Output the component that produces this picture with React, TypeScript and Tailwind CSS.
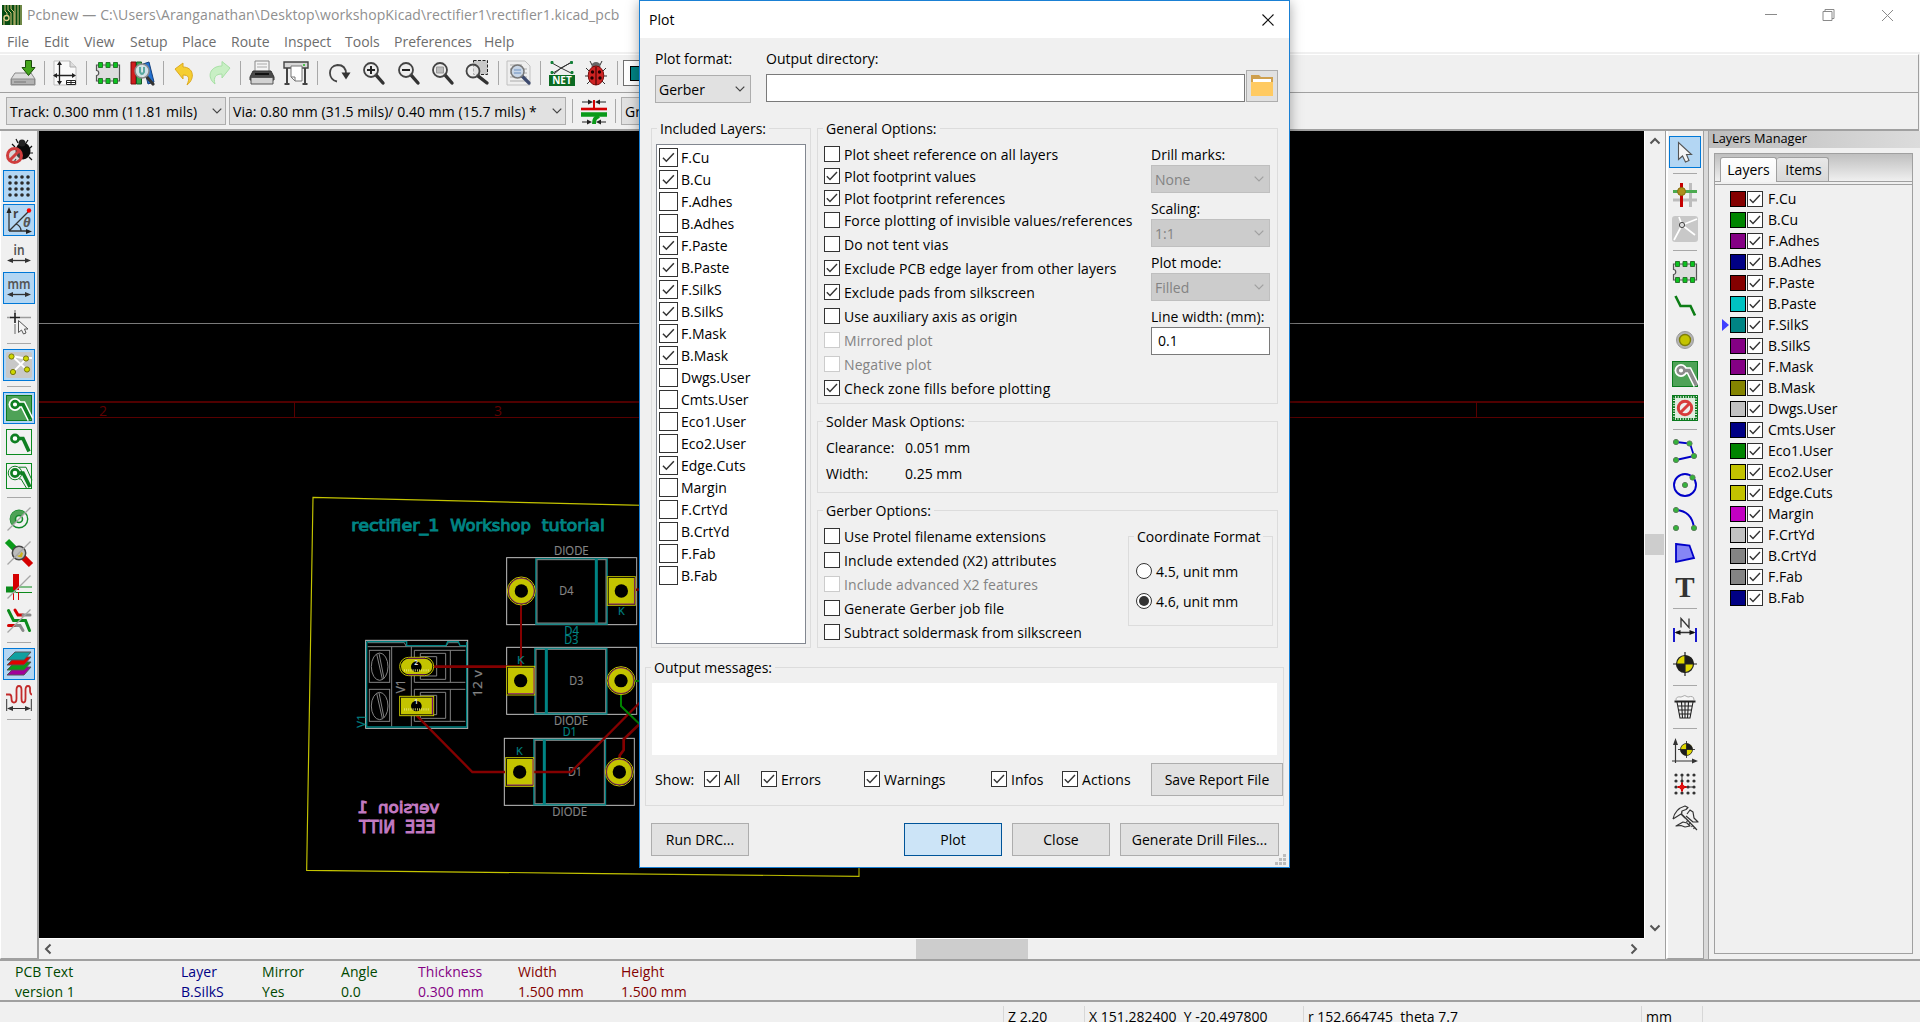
import React from "react";

type Kids = { children?: React.ReactNode };

/* ---------- small controls ---------- */

function Check({ on = false, big = false, off = false }: { on?: boolean; big?: boolean; off?: boolean }) {
  return (
    <span
      className={
        "flex shrink-0 items-center justify-center border bg-white " +
        (big ? "size-[19px] " : "size-4 ") +
        (off ? "border-[#cccccc]" : "border-[#333333]")
      }
    >
      {on && (
        <svg viewBox="0 0 14 14" className={big ? "size-[15px]" : "size-[14px]"}>
          <path d="M1.8 7.3 5 10.5 12 3" fill="none" stroke="#333" strokeWidth="1.4" />
        </svg>
      )}
    </span>
  );
}

function Chevron({ dim = false }: { dim?: boolean }) {
  return (
    <svg viewBox="0 0 10 6" className="h-[6px] w-[10px] shrink-0">
      <path d="M.7.7 5 5 9.3.7" fill="none" stroke={dim ? "#a0a0a0" : "#444"} strokeWidth="1.2" />
    </svg>
  );
}

function Combo({ text, className = "", dim = false, wide = false }: { text: string; className?: string; dim?: boolean; wide?: boolean }) {
  return (
    <div
      className={
        "flex h-7 shrink-0 items-center justify-between border pl-[3px] whitespace-nowrap " +
        (wide ? "pr-[3px] tracking-[0.05px] " : "pr-[5px] ") +
        (dim ? "border-[#bfbfbf] bg-[#cccccc] text-[#838383] " : "border-[#adadad] bg-[#e1e1e1] ") +
        className
      }
    >
      <span className="pt-px">{text}</span>
      <Chevron dim={dim} />
    </div>
  );
}

function Button({ text, className = "", primary = false }: { text: string; className?: string; primary?: boolean }) {
  return (
    <div
      className={
        "flex h-[33px] shrink-0 items-center justify-center border tracking-[0.05px] whitespace-nowrap " +
        (primary ? "border-[#005499] bg-[#cce4f7] " : "border-[#adadad] bg-[#e1e1e1] ") +
        className
      }
    >
      {text}
    </div>
  );
}

function Group({ title, className = "", children }: Kids & { title: string; className?: string }) {
  return (
    <div className={"flex shrink-0 flex-col border border-[#dcdcdc] " + className}>
      <div className="-mt-[9px] ml-[5px] h-[18px] w-fit shrink-0 bg-[#f0f0f0] px-[3px] leading-[18px] whitespace-nowrap">
        {title}
      </div>
      {children}
    </div>
  );
}

function Option({ text, on, off, h = "h-6", track = "" }: { text: string; on?: boolean; off?: boolean; h?: string; track?: string }) {
  return (
    <div className={"flex items-center gap-1 whitespace-nowrap " + h + (off ? " text-[#838383]" : "")}>
      <Check on={on} off={off} />
      <span className={"pt-px " + track}>{text}</span>
    </div>
  );
}

/* ---------- icons (26 x 26) ---------- */

function I({ children, className = "size-[26px]" }: Kids & { className?: string }) {
  return (
    <svg viewBox="0 0 26 26" fill="none" className={className + " shrink-0 overflow-visible"}>
      {children}
    </svg>
  );
}

const Strike = () => <path d="M1.5 24.5 24.5 1.5" stroke="#a6a6a6" strokeWidth="1.3" />;
const Lens = ({ x = 11, y = 10, r = 7 }: { x?: number; y?: number; r?: number }) => (
  <>
    <path d={`M${x + r * 0.7} ${y + r * 0.7} 23 23`} stroke="#333" strokeWidth="3.4" strokeLinecap="round" />
    <circle cx={x} cy={y} r={r} fill="#ececec" fillOpacity=".7" stroke="#444" strokeWidth="1.8" />
  </>
);

const AppIcon = () => (
  <svg viewBox="0 0 20 20" className="size-5 shrink-0">
    <rect width="20" height="20" fill="#064c12" />
    <path d="M3 0v6l2 2v4M6 0v5l3 3v12M9 0v4l3 3v13M13 0v20M16 0v20M19 0v20M2 13v7" stroke="#d8c37c" strokeWidth="1" fill="none" />
    <circle cx="4.500" cy="13" r="2.500" fill="#064c12" stroke="#e3cf8b" strokeWidth="1.300" />
  </svg>
);
const Save = () => (
  <I>
    <path d="M5 13h16l4 6v6H1v-6z" fill="#dcdcdc" stroke="#8a8a8a" />
    <path d="M1.500 19h23v5.500h-23z" fill="#b2b2b2" stroke="#8a8a8a" />
    <path d="M4 22h12" stroke="#777" />
    <path d="M15.500.5h6v7H25l-6.500 8-6.500-8h3.500z" fill="#44a51c" stroke="#1b4d0a" />
  </I>
);
const Page = () => (
  <I>
    <path d="M2 1h16l6 6v18H2z" fill="#fafafa" stroke="#bdbdbd" />
    <path d="M18 1v6h6" stroke="#aaa" fill="#ddd" />
    <path d="M7.500 3v20M2 15.500h20" stroke="#222" strokeWidth="1.300" />
    <path d="m7.500 1 2.500 4H5zM7.500 25l2.500-4H5zM1 15.500 5 13v5zM24 15.500 20 13v5z" fill="#222" />
    <path d="M14.500 20.500h9v4h-9zM14.500 22.500h9M19 20.500v4" stroke="#222" fill="#fff" />
  </I>
);
const Footprint = () => (
  <I>
    <path d="M1.500 5h23v16h-23v-5.500c3 0 3-5 0-5z" fill="#ddd" stroke="#555" strokeWidth="1.200" />
    <path d="M3.500 2.500h4v5h-4zM11 2.500h4v5h-4zM18.500 2.500h4v5h-4zM3.500 18.500h4v5h-4zM11 18.500h4v5h-4zM18.500 18.500h4v5h-4z" fill="#0bc41f" stroke="#28752c" />
  </I>
);
const Library = () => (
  <I>
    <path d="M2 2h5v22H2z" fill="#d11d1d" stroke="#7c0c0c" />
    <path d="M7.500 2h5v22h-5z" fill="#31a54b" stroke="#155c26" />
    <path d="m14 4 6-2 5 20-6 2z" fill="#2472d1" stroke="#123f7d" />
    <path d="m17 16 7 8" stroke="#333" strokeWidth="3.200" strokeLinecap="round" />
    <circle cx="13" cy="11" r="7" fill="#d9e6ea" fillOpacity=".95" stroke="#8a8a8a" strokeWidth="1.500" />
    <path d="M11 7v5q2 4 4 0V7" stroke="#5aa8a0" strokeWidth="2" />
  </I>
);
const Undo = () => (
  <I>
    <path d="M3 9 11 3v4c10 0 13 11 4 18 3-7 2-10-4-10v4z" fill="#f5ce31" stroke="#dca920" />
  </I>
);
const Redo = () => (
  <I>
    <path d="M24 8 16 1.500V6C4 6 0 17 9 24c-2-7 1-10 7-10v4z" fill="#c8efc4" stroke="#a7e0a5" />
  </I>
);
const Printer = () => (
  <I>
    <path d="M6 1h14v11H6z" fill="#f4f4f4" stroke="#888" />
    <path d="M8 4h10M8 7h10" stroke="#aaa" />
    <path d="M4 11h18l3 6v3H1v-3z" fill="#4a4a4a" stroke="#333" />
    <path d="M2 17.500h22V24H2z" fill="#d2d2d2" stroke="#555" />
    <path d="M6 14h14" stroke="#111" strokeWidth="2" />
  </I>
);
const Plotter = () => (
  <I>
    <path d="M1 2h24v6H1z" fill="#d7d7d7" stroke="#444" strokeWidth="1.400" />
    <path d="M4 8v15M22 8v15M1.500 24h5M19.500 24h5" stroke="#444" strokeWidth="2" />
    <path d="M8 6h11v15h-7l-4-4z" fill="#fff" stroke="#777" />
    <path d="M8 17h4v4" stroke="#777" />
    <path d="M20 5h2" stroke="#2b2" strokeWidth="1.500" />
  </I>
);
const Refresh = () => (
  <I>
    <path d="M11 21.500C2 20 1 6 11.500 5c6 0 8.500 4 8.500 9" stroke="#444" strokeWidth="1.800" />
    <path d="M15.500 12.500h9l-4.500 7z" fill="#333" />
  </I>
);
const ZoomIn = () => (
  <I>
    <Lens />
    <path d="M7 10h8M11 6v8" stroke="#222" strokeWidth="2" />
  </I>
);
const ZoomOut = () => (
  <I>
    <Lens />
    <path d="M7 10h8" stroke="#222" strokeWidth="2" />
  </I>
);
const ZoomFit = () => (
  <I>
    <Lens />
    <path d="M7.500 7h7v6h-7z" fill="#bbb" stroke="#999" />
  </I>
);
const ZoomArea = () => (
  <I>
    <path d="M9.500.5h14v14h-14z" fill="#c8c8c8" stroke="#222" strokeDasharray="3 1.500" />
    <Lens x={9} y={11} r={6.500} />
  </I>
);
const Find = () => (
  <I>
    <path d="M1 1h18l5 5v19H1z" fill="#eee" stroke="#c0c0c0" />
    <path d="M4 5h12M4 9h17M4 13h17M4 17h17M4 21h17" stroke="#aaa" />
    <path d="M16 16 23 23" stroke="#3d4a6e" strokeWidth="3.200" strokeLinecap="round" />
    <circle cx="11.500" cy="11.500" r="6.500" fill="#c5d4e6" fillOpacity=".9" stroke="#777" strokeWidth="1.500" />
    <path d="M8 10h7M8 13h7" stroke="#6d92c4" />
  </I>
);
const Net = () => (
  <I>
    <path d="M3 3 12 8l11-6M4 13 21 3M5 14 12 8l10 5" stroke="#333" />
    <path d="M2 1.500h2v2H2zM21.500 1.500h2v2h-2zM2 11.500h2v2H2zM22 11.500h2v2h-2z" fill="#15803a" stroke="#15803a" />
    <rect y="15" width="26" height="11" fill="#0b6b22" />
    <text x="13" y="24.300" textAnchor="middle" fill="#fff" fontSize="10" fontWeight="700" fontFamily="Open Sans">NET</text>
  </I>
);
const LadyBug = () => (
  <I>
    <path d="m9 5-2-4M17 5l2-4M6 11 3 8M20 11l3-3M6 16H2M20 16h4M7 21l-3 3M19 21l3 3" stroke="#333" />
    <ellipse cx="13" cy="6" rx="4.500" ry="4" fill="#666" />
    <ellipse cx="13" cy="15.500" rx="7.800" ry="9.500" fill="#cf2323" stroke="#7c0808" />
    <path d="M13 7v18" stroke="#300" />
    <g fill="#200">
      <circle cx="9.500" cy="12" r="1.700" /><circle cx="16.500" cy="12" r="1.700" /><circle cx="9" cy="18" r="1.700" />
      <circle cx="17" cy="18" r="1.700" />
    </g>
  </I>
);
const TrackWidth = () => (
  <I className="h-[26px] w-[28px]">
    <path d="M0 11h26" stroke="#d40000" strokeWidth="2.600" />
    <path d="M13 11V2" stroke="#d40000" strokeWidth="2" />
    <path d="M0 16.500h26" stroke="#0a9a1a" strokeWidth="4.500" />
    <path d="M13 26c0-5 1-6 5-8" stroke="#0a9a1a" strokeWidth="4" />
    <path d="M1 4h7M25 4h-7M1 24h7M25 24h-7" stroke="#222" />
    <path d="m7 1.500 5 2.500-5 2.500zM19 1.500 14 4l5 2.500zM6 21.500l5 2.500-5 2.500zM20 21.500 15 24l5 2.500z" fill="#222" />
  </I>
);

/* left toolbar */
const DrcOff = () => (
  <I>
    <path d="m12 4-2-4M20 4l2-3M9 8 6 5M24 9l2-2M24 14h3M23 18l3 3M10 20l-2 3" stroke="#111" strokeWidth="1.200" />
    <ellipse cx="17" cy="12" rx="7.500" ry="8.500" fill="#0a0a0a" />
    <circle cx="16" cy="4" r="3.500" fill="#222" />
    <circle cx="8.500" cy="16.500" r="7" fill="#aaa" fillOpacity=".35" stroke="#cf3d3d" strokeWidth="3" />
    <path d="m13.500 11.500-10 10" stroke="#cf3d3d" strokeWidth="3" />
  </I>
);
const dots = [4, 10, 16, 22];
const GridDots = () => (
  <I>
    {dots.map((y) => dots.map((x) => <circle key={x + "-" + y} cx={x} cy={y} r="1.800" fill="#2b2b2b" />))}
  </I>
);
const Polar = () => (
  <I>
    <path d="M3 24V4M3 24h19M3 24 23 4M10 17q5 2 5 7" stroke="#333" strokeWidth="1.300" />
    <path d="M3 0 5.500 6h-5zM26 24.500l-6-2.500v5z" fill="#222" />
    <circle cx="23" cy="3.500" r="2.200" fill="#f00" />
    <text x="7" y="11" fontSize="12" fontWeight="700" fill="#444" fontFamily="Open Sans">r</text>
    <text x="17" y="20" fontSize="13" fontWeight="700" fontStyle="italic" fill="#555" fontFamily="Open Sans">θ</text>
  </I>
);
const Unit = ({ t }: { t: string }) => (
  <I>
    <text x="13" y="13.500" textAnchor="middle" fontSize="14.500" fontWeight="600" fill="#555" fontFamily="Noto Sans" textLength={t === "mm" ? 23 : 11} lengthAdjust="spacingAndGlyphs">{t}</text>
    <path d="M4 19.500h18" stroke="#333" strokeWidth="1.300" />
    <path d="M1 19.500 7 17v5zM25 19.500 19 17v5z" fill="#333" />
  </I>
);
const CursorShape = () => (
  <I>
    <path d="M9 1v4M9 15v10M1 8.500h4M14 8.500h11" stroke="#9c9c9c" strokeWidth="1.600" />
    <path d="M9 4v10M4 8.500h10" stroke="#222" strokeWidth="1.600" />
    <path d="M12.500 11.500v12l3-2.500 2 4 2.500-1-1.500-4h3.500z" fill="#f4f4f4" stroke="#555" />
  </I>
);
const Rats = () => (
  <I>
    <rect width="26" height="26" rx="2" fill="#c8c8c8" />
    <path d="m6 4 16 3M6 4l15 14M7 20 20 7M20 6h6" stroke="#fff" strokeWidth="1.800" />
    <g fill="#cfd800" stroke="#77770a">
      <circle cx="5.500" cy="4.500" r="2.600" /><circle cx="20" cy="6.500" r="2.600" /><circle cx="7" cy="20" r="2.600" /><circle cx="21" cy="17.500" r="2.600" />
    </g>
  </I>
);
const ZoneFilled = ({ core = "#0f7f22" }: { core?: string }) => (
  <I>
    <rect x=".5" y=".5" width="25" height="25" fill="#4ea257" stroke="#0a7a1d" />
    <path d="M9 9.500h8l7.500 15" stroke="#fff" strokeWidth="6.500" />
    <circle cx="9" cy="9.500" r="6.500" fill="#fff" />
    <path d="M9 9.500h8l7.500 15" stroke={core} strokeWidth="3.600" />
    <circle cx="9" cy="9.500" r="3.400" fill="#fff" stroke={core} strokeWidth="2.600" />
  </I>
);
const ZoneEmpty = () => (
  <I>
    <rect x=".5" y=".5" width="25" height="25" fill="#f2f2f2" stroke="#0a8a20" />
    <path d="M10 9.500h7l6 13" stroke="#0f7f22" strokeWidth="3.600" />
    <circle cx="9" cy="9.500" r="3.600" fill="#fff" stroke="#0f7f22" strokeWidth="2.600" />
  </I>
);
const ZoneOutline = () => (
  <I>
    <rect x=".5" y=".5" width="25" height="25" fill="#f2f2f2" stroke="#0a8a20" />
    <path d="M13 4.200h7l6 13M13 16h2l6 10" stroke="#0f7f22" />
    <circle cx="9" cy="10" r="6.800" stroke="#0f7f22" />
    <path d="M10 10h7l7 14" stroke="#0f7f22" strokeWidth="3.600" />
    <circle cx="9" cy="10" r="3.600" fill="#fff" stroke="#0f7f22" strokeWidth="2.600" />
  </I>
);
const PadSketch = () => (
  <I>
    <circle cx="13" cy="13" r="8.700" fill="#f2f2f2" stroke="#12892a" strokeWidth="1.400" />
    <path d="M7 19.500A8.700 8.700 0 0 1 19 6.500z" fill="#4ea257" />
    <circle cx="13" cy="13" r="3.500" fill="#e8f2e8" stroke="#12892a" strokeWidth="1.600" />
    <Strike />
  </I>
);
const ViaSketch = () => (
  <I>
    <path d="m1 1 12 12" stroke="#0a9a1a" strokeWidth="6" />
    <path d="m13 13 12 12" stroke="#d40000" strokeWidth="6" />
    <circle cx="13" cy="13" r="6.700" fill="#bdbdbd" stroke="#444" strokeWidth="1.500" />
    <path d="M10 15q4 2 5-3l2 1-1 4q-3 1-6-2z" fill="#cbb21c" />
    <Strike />
  </I>
);
const TrackSketch = () => (
  <I>
    <path d="M0 15.500h10" stroke="#0b8a1b" strokeWidth="6" />
    <path d="M10 13h16M10 18.500h16" stroke="#0b8a1b" />
    <path d="M7.500 18v8M12.500 18v8" stroke="#d40000" />
    <path d="M10 0v16" stroke="#d40000" strokeWidth="6" />
    <Strike />
  </I>
);
const Contrast = () => (
  <I>
    <g strokeWidth="3" strokeLinecap="round">
      <path d="m9 2 3 5h5" stroke="#d40000" /><path d="M17 7h7M8 17.500h6l3 5" stroke="#8a8a8a" />
      <path d="M2.500 17.500H8" stroke="#d40000" /><path d="m2.500 2.500 5 10h12l4 10" stroke="#0b8a1b" />
    </g>
    <Strike />
  </I>
);
const LayerStack = () => (
  <I>
    <g stroke="#555">
      <path d="M1 24h17l7-8H9z" fill="#a2009a" /><path d="M1 19h17l7-8H9z" fill="#0a9a1a" />
      <path d="M1 14h17l7-8H9z" fill="#e00000" /><path d="M1 9h17l7-8H9z" fill="#0fa0a0" />
    </g>
  </I>
);
const Squiggle = () => (
  <I>
    <path d="M0 9.500h3.500q2 0 2 4t2.500 4 2.500-4V5q0-4 2.500-4t2.500 4v8.500q0 4 2 4t2-4V5q0-4 2.500-4T24 5q0 4.500 2 4.500" stroke="#c22a2a" strokeWidth="1.800" />
    <path d="M.7 14v12M25.300 14v12M3 23.500h20" stroke="#333" />
    <path d="m1 23.500 6-2.500v5zM25 23.500 19 21v5z" fill="#333" />
  </I>
);

/* right toolbar */
const Arrow = () => (
  <I>
    <path d="M6.500 3.500v17l4-3.500 3 6 3.500-1.500-2.500-6h5z" fill="#f5f5f5" stroke="#555" strokeWidth="1.100" />
  </I>
);
const HighlightNet = () => (
  <I>
    <path d="M18.500 1v24M1 18h24" stroke="#bdbdbd" strokeWidth="3" />
    <path d="M1 9.500h24" stroke="#4cab50" strokeWidth="3" />
    <path d="M9.500 1v24" stroke="#c50000" strokeWidth="3" />
    <circle cx="9.500" cy="9.500" r="4" fill="#ab901c" stroke="#866f10" />
  </I>
);
const LocalRats = () => (
  <I>
    <rect width="26" height="26" rx="3" fill="#c8c8c8" />
    <path d="M10 9 7 1M10 9l15-6M10 9l13 10M10 9 2 24" stroke="#fff" strokeWidth="1.700" />
    <circle cx="10" cy="9" r="2.600" fill="#ddd" stroke="#444" />
  </I>
);
const Route = () => (
  <I><path d="m3.500 3 5 10h10l4.500 9.500" stroke="#0d7d16" strokeWidth="2.600" /></I>
);
const ViaIcon = () => (
  <I>
    <circle cx="13" cy="13" r="8.500" fill="#b4b4b4" stroke="#999" />
    <circle cx="13" cy="13" r="5.500" fill="#c4c400" stroke="#7e7e08" strokeWidth="1.400" />
  </I>
);
const Keepout = () => (
  <I>
    <rect x="1.500" y="1.500" width="23" height="23" fill="#dfeee0" stroke="#0a7a1d" strokeWidth="3" strokeDasharray="1.600 1" />
    <rect x=".5" y=".5" width="25" height="25" stroke="#0a7a1d" />
    <circle cx="13" cy="13" r="6.700" fill="#eee" stroke="#d83c3c" strokeWidth="3" />
    <path d="m17.500 8.500-9 9" stroke="#d83c3c" strokeWidth="3" />
  </I>
);
const Dot = ({ x, y }: { x: number; y: number }) => <circle cx={x} cy={y} r="2.600" fill="#34b53a" stroke="#5a7d5a" />;
const PolyLine = () => (
  <I>
    <path d="m4 4 14 1.500L22 18 4 22" stroke="#0000c8" strokeWidth="1.800" />
    <Dot x={4} y={4} /><Dot x={17.500} y={5.500} /><Dot x={22} y={18} /><Dot x={4} y={22} />
  </I>
);
const CircleIcon = () => (
  <I>
    <circle cx="13" cy="13" r="11" stroke="#0000c8" strokeWidth="1.900" />
    <Dot x={13} y={13} /><Dot x={20.500} y={5.500} />
  </I>
);
const ArcIcon = () => (
  <I>
    <path d="M4 4q16 1 18 18" stroke="#0000c8" strokeWidth="1.900" />
    <Dot x={4} y={4} /><Dot x={22} y={22} /><Dot x={4} y={22} />
  </I>
);
const PolyIcon = () => (
  <I><path d="m4 4 13.500 1.500L22 18 4 22z" fill="#8585f5" stroke="#0000c8" strokeWidth="1.800" /></I>
);
const TextIcon = () => (
  <I><text x="13" y="23" textAnchor="middle" fontSize="29" fontWeight="700" fill="#333" fontFamily="Liberation Serif">T</text></I>
);
const Dimension = () => (
  <I>
    <path d="M2 11v14M24 11v14" stroke="#0000c8" strokeWidth="1.800" />
    <path d="M4 15.500h18M9 10.500v-9l8 9v-9" stroke="#333" strokeWidth="1.300" />
    <path d="m2.500 15.500 6-2.500v5zM23.500 15.500l-6-2.500v5z" fill="#111" />
  </I>
);
const Target = ({ x = 13, y = 13, r = 8.5 }: { x?: number; y?: number; r?: number }) => (
  <g transform={`translate(${x} ${y}) scale(${r / 8.5})`}>
    <circle r="8.500" fill="#e0d800" stroke="#222" strokeWidth="1.200" />
    <path d="M0 0V-8.500A8.500 8.500 0 0 1 8.500 0zM0 0v8.500A8.500 8.500 0 0 1-8.500 0z" fill="#1c1c1c" />
    <path d="M0-12v24M-12 0h24" stroke="#222" strokeWidth="1.200" />
  </g>
);
const TargetIcon = () => <I><Target /></I>;
const Trash = () => (
  <I>
    <path d="M4 6q0-4 5-3 4-3 7 0 6-2 6 3" fill="#f5f5f5" stroke="#aaa" />
    <path d="M2.500 7.500h21" stroke="#222" strokeWidth="2" />
    <path d="m5 8 3 16h10l3-16M5.500 12h15M6.500 16h13M7 20h12M9.500 8l1 16M13 8v16M16.500 8l-1 16" stroke="#222" strokeWidth="1.100" />
  </I>
);
const Origin = () => (
  <I>
    <path d="M3.500 26V4M0 24h24" stroke="#333" strokeWidth="1.200" />
    <path d="M3.500 1 6 8H1zM26 24l-6-2.500v5z" fill="#333" />
    <Target x={14.500} y={12.500} r={6} />
  </I>
);
const GridOrigin = () => (
  <I>
    {dots.map((y) => dots.map((x) => <circle key={x + "-" + y} cx={x} cy={y} r="1.600" fill="#333" />))}
    <path d="M10 4v12M10 16h12" stroke="#333" />
    <path d="M10 11.500v9M5.500 16h9" stroke="#d40000" strokeWidth="2" />
    <circle cx="10" cy="16" r="2.600" fill="#e01010" />
  </I>
);
const Caliper = () => (
  <I>
    <g stroke="#333" strokeWidth="1.200" strokeLinejoin="round">
      <path d="M1 14Q3 4 13 1l3 1.500-2 2-4 1.500q-1 3 1 4.500L25 25M1 14l8-5 4 4" />
      <path d="M15 9l3-4 3 2 1 6 4 4h-5l-7-6M4 21l7-4 4 1 3 3-5 1-4-1.500-5 .5zM16 15l-1.500 2M18.500 17.500 17 19.500M21 20l-1.500 2M23 22l-1.500 2" />
    </g>
  </I>
);

/* ---------- toolbars ---------- */

type Tool = { icon?: React.ReactNode; on?: boolean };
const SEP: Tool = {};

function VToolbar({ items }: { items: Tool[] }) {
  return (
    <div className="flex w-8 flex-col">
      {items.map((t, i) =>
        t.icon ? (
          <div
            key={i}
            className={"mb-0.5 flex size-8 shrink-0 items-center justify-center border " + (t.on ? "border-[#0078d7] bg-[#b3d6f3]" : "border-transparent")}
          >
            {t.icon}
          </div>
        ) : (
          <div key={i} className="mx-1 mb-[5px] h-1 shrink-0 border-b border-[#a8a8a8]" />
        )
      )}
    </div>
  );
}

const leftTools: Tool[] = [
  { icon: <DrcOff /> }, { icon: <GridDots />, on: true }, { icon: <Polar />, on: true }, { icon: <Unit t="in" /> },
  { icon: <Unit t="mm" />, on: true }, { icon: <CursorShape /> }, SEP, { icon: <Rats />, on: true }, SEP,
  { icon: <ZoneFilled />, on: true }, { icon: <ZoneEmpty /> }, { icon: <ZoneOutline /> }, SEP, { icon: <PadSketch /> },
  { icon: <ViaSketch /> }, { icon: <TrackSketch /> }, { icon: <Contrast /> }, SEP, { icon: <LayerStack />, on: true },
  { icon: <Squiggle /> }, SEP,
];

const rightTools: Tool[] = [
  { icon: <Arrow />, on: true }, SEP, { icon: <HighlightNet /> }, { icon: <LocalRats /> }, SEP, { icon: <Footprint /> },
  { icon: <Route /> }, { icon: <ViaIcon /> }, { icon: <ZoneFilled core="#8c8c8c" /> }, { icon: <Keepout /> }, SEP,
  { icon: <PolyLine /> }, { icon: <CircleIcon /> }, { icon: <ArcIcon /> }, { icon: <PolyIcon /> }, { icon: <TextIcon /> }, SEP,
  { icon: <Dimension /> }, { icon: <TargetIcon /> }, SEP, { icon: <Trash /> }, SEP, { icon: <Origin /> }, { icon: <GridOrigin /> },
  { icon: <Caliper /> },
];

const topTools: (React.ReactNode | null)[] = [
  <Save />, null, <Page />, null, <Footprint />, <Library />, null, <Undo />, <Redo />, null, <Printer />, <Plotter />, null,
  <Refresh />, <ZoomIn />, <ZoomOut />, <ZoomFit />, <ZoomArea />, null, <Find />, null, <Net />, <LadyBug />, null,
];

const VSep = ({ className = "" }: { className?: string }) => <div className={"h-6 w-px shrink-0 bg-[#a8a8a8] " + className} />;

function TopToolbar() {
  return (
    <div className="flex h-[38px] shrink-0 items-center border-b border-[#a0a0a0] bg-[#f0f0f0] pb-px pl-[5.500px]">
      {topTools.map((t, i) => (
        <div key={i} className={"flex shrink-0 justify-center " + (t ? "w-[34.5px]" : "w-2")}>
          {t ?? <VSep />}
        </div>
      ))}
      <div className="ml-px flex h-[26px] w-60 items-center border border-[#707070] bg-white pl-1.5">
        <div className="size-[15px] border border-black bg-[#008484]" />
      </div>
    </div>
  );
}

/* ---------- board drawing ---------- */

function StrokeText({ x, y, w, size, fill, t, bold, rot }: { x: number; y: number; w: number; size: number; fill: string; t: string; bold?: boolean; rot?: boolean }) {
  return (
    <text
      x={x}
      y={y}
      fontSize={size}
      fill={fill}
      stroke={fill}
      strokeWidth={bold ? 3 : 0.6}
      fontFamily={bold ? "DejaVu Sans" : "Open Sans"}
      textLength={w}
      lengthAdjust="spacingAndGlyphs"
      transform={rot ? `rotate(-90 ${x} ${y})` : undefined}
    >
      {t}
    </text>
  );
}

function RoundPad({ x, y }: { x: number; y: number }) {
  return (
    <g>
      <circle cx={x} cy={y} r="42" fill="#000" stroke="#c4c400" strokeWidth="3" />
      <circle cx={x} cy={y} r="38.500" fill="#c4c400" stroke="#840084" strokeWidth="2" />
      <circle cx={x} cy={y} r="20" fill="#000" />
    </g>
  );
}

function SquarePad({ x, y }: { x: number; y: number }) {
  return (
    <g>
      <rect x={x - 42} y={y - 43} width="84" height="86" fill="#000" stroke="#c4c400" strokeWidth="3" />
      <rect x={x - 38} y={y - 39} width="78" height="79" fill="#c4c400" />
      <path d={`M${x - 38} ${y + 39}h78v-78`} fill="none" stroke="#840084" strokeWidth="2.500" />
      <circle cx={x} cy={y} r="20" fill="#000" />
    </g>
  );
}

function DiodeBody({ x, y, bx, bw, bar }: { x: number; y: number; bx: number; bw: number; bar: number }) {
  return (
    <g fill="none">
      <rect x={x} y={y} width="390" height="201" stroke="#c2c2c2" strokeWidth="3" />
      <rect x={bx} y={y + 4} width={bw} height="195" stroke="#008484" strokeWidth="5" />
      <rect x={bx + 3} y={y + 6} width={bw - 6} height="190" stroke="#848484" strokeWidth="3" />
      <path d={`M${bar} ${y + 4}v195`} stroke="#008484" strokeWidth="9" />
    </g>
  );
}

function Board() {
  const teal = "#008484";
  const grey = "#848484";
  return (
    <svg viewBox="39 131 1605 807" className="h-[807px] w-[1605px] shrink-0 bg-black" fill="none">
      <path d="M39 323.500h1605" stroke="#7a7a7a" />
      <path d="M39 402h1605" stroke="#500000" strokeWidth="2" />
      <path d="M39 417.500h1605M294.500 402v15.500M1476.500 402v15.500" stroke="#580000" />
      <text x="99" y="415.500" fontSize="14" fill="#600000" fontFamily="Open Sans">2</text>
      <text x="494" y="415.500" fontSize="14" fill="#600000" fontFamily="Open Sans">3</text>
      <g transform="translate(300 490) scale(.33333)">
        <path d="M39 22 20 1141 842 1150 1677 1159V48L1030 46z" stroke="#c4c400" strokeWidth="3.500" />
        <StrokeText x={154} y={123} w={264} size={50} fill={teal} t="rectifier_1" bold />
        <StrokeText x={451} y={123} w={242} size={50} fill={teal} t="Workshop" bold />
        <StrokeText x={725} y={123} w={190} size={50} fill={teal} t="tutorial" bold />

        <StrokeText x={762} y={195} w={104} size={37} fill={grey} t="DIODE" />
        <StrokeText x={762} y={706} w={102} size={37} fill={grey} t="DIODE" />
        <StrokeText x={757} y={979} w={104} size={37} fill={grey} t="DIODE" />
        <DiodeBody x={620} y={203} bx={708} bw={213} bar={889} />
        <DiodeBody x={620} y={472} bx={705} bw={215} bar={739} />
        <DiodeBody x={613} y={745} bx={702} bw={214} bar={733} />
        <StrokeText x={778} y={315} w={42} size={37} fill={grey} t="D4" />
        <StrokeText x={808} y={585} w={42} size={37} fill={grey} t="D3" />
        <StrokeText x={804} y={858} w={42} size={37} fill={grey} t="D1" />
        <StrokeText x={793} y={436} w={44} size={37} fill={teal} t="D4" />
        <StrokeText x={793} y={463} w={42} size={37} fill={teal} t="D3" />
        <StrokeText x={788} y={738} w={42} size={37} fill={teal} t="D1" />

        <g stroke={grey} strokeWidth="3">
          <rect x="197" y="451" width="306" height="264" stroke="#c2c2c2" />
          <path d="M203 470h295M275 470v240M334 470v240" />
          <rect x="208" y="481" width="61" height="96" />
          <rect x="208" y="598" width="61" height="96" />
          <ellipse cx="239" cy="530" rx="25" ry="41" />
          <ellipse cx="239" cy="648" rx="25" ry="41" />
          <path d="m230 492 17 75M237 490l15 75M230 610l17 75M237 608l15 75" />
          <path d="M343 577V481h153M343 577h153M451 481v96M361 568V490h76v78h-76M361 500h49v58h-49z" />
          <path d="M343 694v-96h153M343 694h153M451 598v96M361 685v-78h76v78h-76M361 616h49v58h-49z" />
          <path d="M203 458h110l6 12M437 470l8-12h32" />
        </g>
        <path d="M200 455v256h300V455M200 455h120v12h118l5-12h32l5 12h20" stroke={teal} strokeWidth="4" />
        <StrokeText x={545} y={621} w={80} size={36} fill={grey} t="12 v" rot />
        <StrokeText x={315} y={610} w={42} size={36} fill={grey} t="V1" rot />
        <StrokeText x={194} y={713} w={40} size={34} fill={teal} t="V1" rot />

        <g stroke="#840000" strokeWidth="8">
          <path d="M350 530h312" />
          <path d="M663 303v270" strokeWidth="6" />
          <path d="m350 677 167 169h142M660 846h153L1030 627" strokeWidth="7" />
          <path d="M959 846v-50l12-16v-32l60-58M966 303l70-6" />
        </g>
        <path d="M963 573v75l68 66M963 573h80" stroke="#008400" strokeWidth="6" />

        <RoundPad x={664} y={303} />
        <SquarePad x={964} y={303} />
        <SquarePad x={662} y={572} />
        <RoundPad x={963} y={572} />
        <SquarePad x={659} y={846} />
        <RoundPad x={958} y={846} />
        <rect x="299" y="502" width="102" height="55" rx="27" fill="#000" stroke="#c4c400" strokeWidth="3" />
        <rect x="303" y="506" width="94" height="47" rx="24" fill="#c4c400" />
        <path d="M322 505h55M322 554h55" stroke="#840084" strokeWidth="2" />
        <rect x="299" y="619" width="102" height="58" fill="#000" stroke="#c4c400" strokeWidth="3" />
        <rect x="303" y="623" width="94" height="50" fill="#c4c400" />
        <path d="M397 622v52" stroke="#840084" strokeWidth="3" />
        <circle cx="349" cy="530" r="16" fill="#000" />
        <circle cx="349" cy="648" r="16" fill="#000" />
        <path d="M312 541h76M312 658h76" stroke="#e4e47c" strokeWidth="7" strokeDasharray="2.500 4" />
        <text x="343" y="524" fontSize="20" fontWeight="700" fill="#ddd" fontFamily="Open Sans">2</text>
        <text x="343" y="642" fontSize="20" fontWeight="700" fill="#ddd" fontFamily="Open Sans">1</text>

        <StrokeText x={954} y={376} w={20} size={35} fill={teal} t="K" />
        <StrokeText x={651} y={521} w={22} size={35} fill={teal} t="K" />
        <StrokeText x={648} y={795} w={20} size={35} fill={teal} t="K" />

        <g transform="scale(-1 1)">
          <StrokeText x={-418} y={969} w={184} size={46} fill="#c27ac2" t="version" bold />
          <StrokeText x={-204} y={969} w={32} size={48} fill="#c27ac2" t="1" bold />
          <StrokeText x={-407} y={1028} w={92} size={52} fill="#c27ac2" t="EEE" bold />
          <StrokeText x={-286} y={1028} w={108} size={52} fill="#c27ac2" t="NITT" bold />
        </g>
      </g>
    </svg>
  );
}

/* ---------- layers manager ---------- */

const layers: [string, string, boolean][] = [
  ["F.Cu", "bg-[#840000]", true], ["B.Cu", "bg-[#008400]", true], ["F.Adhes", "bg-[#840084]", false], ["B.Adhes", "bg-[#000084]", false],
  ["F.Paste", "bg-[#840000]", true], ["B.Paste", "bg-[#00c2c2]", true], ["F.SilkS", "bg-[#008484]", true], ["B.SilkS", "bg-[#840084]", true],
  ["F.Mask", "bg-[#840084]", true], ["B.Mask", "bg-[#848400]", true], ["Dwgs.User", "bg-[#c2c2c2]", false], ["Cmts.User", "bg-[#000084]", false],
  ["Eco1.User", "bg-[#008400]", false], ["Eco2.User", "bg-[#c2c200]", false], ["Edge.Cuts", "bg-[#c2c200]", true], ["Margin", "bg-[#c200c2]", false],
  ["F.CrtYd", "bg-[#c2c2c2]", false], ["B.CrtYd", "bg-[#848484]", false], ["F.Fab", "bg-[#848484]", false], ["B.Fab", "bg-[#000084]", false],
];

function LayersManager() {
  return (
    <div className="flex w-[212px] shrink-0 flex-col border-l border-[#a0a0a0] bg-[#f0f0f0]">
      <div className="h-[17px] shrink-0 bg-linear-to-r from-[#bdbdbd] to-[#dcdcdc] pl-[3px] text-[12.800px] leading-[15px]">Layers Manager</div>
      <div className="mt-[5px] mr-[7px] ml-[5px] flex h-[801px] flex-col border border-[#a0a0a0]">
        <div className="flex h-7 shrink-0 items-end border-b border-[#a0a0a0] bg-linear-to-b from-[#bfbfbf] to-[#f0f0f0] pl-[5px]">
          <div className="-mb-px flex h-[25px] w-[57px] items-center justify-center rounded-t-[3px] border border-b-0 border-[#a0a0a0] bg-linear-to-b from-white to-[#f4f4f4]">Layers</div>
          <div className="flex h-6 w-[52px] items-center justify-center rounded-t-[3px] border border-b-0 border-l-0 border-[#a0a0a0] bg-linear-to-b from-[#e8e8e8] to-[#d8d8d8] pl-0.5">Items</div>
        </div>
        <div className="h-[3px] shrink-0 border-b border-[#a0a0a0]" />
        <div className="flex flex-col pt-[3px] pl-[7px]">
          {layers.map(([name, bg]) => (
            <div key={name} className="flex h-[21px] items-center">
              <div className="w-2">
                {name === "F.SilkS" && (
                  <svg viewBox="0 0 7 12" className="h-3 w-[7px]">
                    <path d="M0 0l7 6-7 6z" fill="#4040ff" />
                  </svg>
                )}
              </div>
              <div className={"mr-px size-4 border border-black " + bg} />
              <Check on />
              <span className="ml-[5px]">{name}</span>
            </div>
          ))}
        </div>
      </div>
    </div>
  );
}

/* ---------- plot dialog ---------- */

function PlotDialog() {
  return (
    <div className="absolute top-0 left-[639px] flex h-[868px] w-[651px] flex-col border border-[#1a80d4] bg-[#f0f0f0] shadow-[0_2px_12px_rgba(0,0,0,0.35)]">
      <div className="flex h-[37px] shrink-0 items-center justify-between bg-white pr-[15px] pl-[9px]">
        <span>Plot</span>
        <svg viewBox="0 0 12 12" className="size-3">
          <path d="M.5.500l11 11M11.500.5l-11 11" stroke="#111" strokeWidth="1.100" />
        </svg>
      </div>

      <div className="mt-[11px] flex h-[54px] shrink-0 pl-[15px]">
        <div className="w-[111px]">
          <div className="h-[26px] leading-5">Plot format:</div>
          <Combo text="Gerber" className="w-24" />
        </div>
        <div className="w-[480px]">
          <div className="h-[25px] leading-5">Output directory:</div>
          <div className="h-7 w-[479px] border border-[#7a7a7a] bg-white" />
        </div>
        <div className="mt-[21px] flex size-8 items-center justify-center border border-[#adadad] bg-[#e1e1e1]">
          <svg viewBox="0 0 22 22" className="size-[22px]">
            <path d="M0 0h8l2 2h12v6H0z" fill="#cfa04e" />
            <path d="M2 4h18v5H2z" fill="#fff" />
            <path d="M0 7h22v14H0z" fill="#ffca61" />
          </svg>
        </div>
      </div>

      <div className="mt-[25px] ml-[11px] flex shrink-0 gap-[6px]">
        <Group title="Included Layers:" className="h-[520px] w-40">
          <div className="mt-[6px] ml-1 flex h-[500px] w-[150px] flex-col border border-[#828790] bg-white pt-px">
            {layers.map(([name, , on]) => (
              <div key={name} className="flex h-[22px] items-center gap-[3px] pl-0.5">
                <Check on={on} big />
                <span className="pt-px">{name}</span>
              </div>
            ))}
          </div>
        </Group>

        <div className="flex flex-col">
          <Group title="General Options:" className="h-[276px] w-[461px]">
            <div className="flex pt-[5px] pl-1.5">
              <div className="w-[327px]">
                <Option h="h-[22px]" text="Plot sheet reference on all layers" track="tracking-[0.04px]" />
                <Option h="h-[22px]" text="Plot footprint values" on />
                <Option h="h-[22px]" text="Plot footprint references" on track="tracking-[0.04px]" />
                <Option h="mb-px h-[22px]" text="Force plotting of invisible values/references" track="tracking-[0.13px]" />
                <Option text="Do not tent vias" track="tracking-[0.1px]" />
                <Option text="Exclude PCB edge layer from other layers" on track="tracking-[0.11px]" />
                <Option text="Exclude pads from silkscreen" on track="tracking-[0.06px]" />
                <Option text="Use auxiliary axis as origin" track="tracking-[0.08px]" />
                <Option text="Mirrored plot" off track="tracking-[0.1px]" />
                <Option text="Negative plot" off track="tracking-[0.1px]" />
                <Option text="Check zone fills before plotting" on track="tracking-[0.18px]" />
              </div>
              <div className="w-[119px] pt-px">
                <div className="h-[21px] leading-[21px]">Drill marks:</div>
                <Combo text="None" dim className="mb-[5px] w-[119px]" />
                <div className="h-[21px] leading-[21px]">Scaling:</div>
                <Combo text="1:1" dim className="mb-[5px] w-[119px]" />
                <div className="h-[21px] leading-[21px]">Plot mode:</div>
                <Combo text="Filled" dim className="mb-[5px] w-[119px]" />
                <div className="h-[21px] leading-[21px] tracking-[0.05px] whitespace-nowrap">Line width: (mm):</div>
                <div className="flex h-7 items-center border border-[#7a7a7a] bg-white pl-1.5">0.1</div>
              </div>
            </div>
          </Group>
          <Group title="Solder Mask Options:" className="mt-[17px] h-[72px] w-[461px]">
            <div className="grid grid-cols-[79px_1fr] pt-1 pl-[8px] leading-[26px]">
              <span>Clearance:</span><span>0.051 mm</span>
              <span>Width:</span><span>0.25 mm</span>
            </div>
          </Group>
          <Group title="Gerber Options:" className="mt-[17px] h-[138px] w-[461px]">
            <div className="flex pt-1 pl-1.5">
              <div className="w-[304px]">
                <Option text="Use Protel filename extensions" />
                <Option text="Include extended (X2) attributes" track="tracking-[0.13px]" />
                <Option text="Include advanced X2 features" off track="tracking-[0.08px]" />
                <Option text="Generate Gerber job file" track="tracking-[0.1px]" />
                <Option text="Subtract soldermask from silkscreen" />
              </div>
              <Group title="Coordinate Format" className="mt-3 h-[90px] w-[145px]">
                <div className="mt-[10px] flex h-[30px] items-center gap-1 pl-[7px]">
                  <span className="size-4 rounded-full border border-[#333] bg-white" />
                  <span className="pt-px">4.5, unit mm</span>
                </div>
                <div className="flex h-[30px] items-center gap-1 pl-[7px]">
                  <span className="flex size-4 items-center justify-center rounded-full border border-[#333] bg-white">
                    <span className="size-[10px] rounded-full bg-[#333]" />
                  </span>
                  <span className="pt-px">4.6, unit mm</span>
                </div>
              </Group>
            </div>
          </Group>
        </div>
      </div>

      <Group title="Output messages:" className="mt-[19px] ml-[5px] h-[139px] w-[639px]">
        <div className="mt-[6px] ml-1.5 h-[72px] w-[625px] shrink-0 bg-white" />
        <div className="mt-2 flex h-[33px] shrink-0 items-center pl-[9px]">
          <span className="w-[49px]">Show:</span>
          <div className="w-[57px] pb-px"><Option text="All" on track="tracking-[0.1px]" /></div>
          <div className="w-[103px] pb-px"><Option text="Errors" on /></div>
          <div className="w-[127px] pb-px"><Option text="Warnings" on /></div>
          <div className="w-[71px] pb-px"><Option text="Infos" on /></div>
          <div className="w-[89px] pb-px"><Option text="Actions" on track="tracking-[0.15px]" /></div>
          <Button text="Save Report File" className="w-[132px]" />
        </div>
      </Group>

      <div className="mt-[17px] flex shrink-0 pl-[11px]">
        <Button text="Run DRC..." className="mr-[155px] w-[98px]" />
        <Button text="Plot" primary className="mr-[10px] w-[98px]" />
        <Button text="Close" className="mr-[10px] w-[98px]" />
        <Button text="Generate Drill Files..." className="w-[159px]" />
      </div>
      <svg viewBox="0 0 11 11" className="absolute right-[3px] bottom-0.5 size-[11px]" fill="#bcbcbc">
        <path d="M8 0h3v3H8zM8 4h3v3H8zM4 4h3v3H4zM8 8h3v3H8zM4 8h3v3H4zM0 8h3v3H0z" />
      </svg>
    </div>
  );
}

/* ---------- bars ---------- */

const menus: [string, string][] = [
  ["File", "w-[37px]"], ["Edit", "w-10"], ["View", "w-[46px]"], ["Setup", "w-[52px]"], ["Place", "w-[49px]"], ["Route", "w-[53px]"],
  ["Inspect", "w-[61px]"], ["Tools", "w-[49px]"], ["Preferences", "w-[90px]"], ["Help", "w-10"],
];

const info: [string, string, string][] = [
  ["PCB Text", "version 1", "w-[166px] text-[#004800]"],
  ["Layer", "B.SilkS", "w-[81px] text-[#000084]"],
  ["Mirror", "Yes", "w-[79px] text-[#004800]"],
  ["Angle", "0.0", "w-[77px] text-[#004800]"],
  ["Thickness", "0.300 mm", "w-[100px] text-[#840084]"],
  ["Width", "1.500 mm", "w-[103px] text-[#840000]"],
  ["Height", "1.500 mm", "w-[100px] text-[#840000]"],
];

function ScrollArrow({ d }: { d: string }) {
  return (
    <svg viewBox="0 0 12 12" className="size-3 shrink-0">
      <path d={d} fill="none" stroke="#555" strokeWidth="2" />
    </svg>
  );
}

export default function App() {
  return (
    <div className="relative flex h-[1022px] w-[1920px] flex-col overflow-hidden bg-[#f0f0f0] font-['Open_Sans',sans-serif] text-[14px] leading-5 text-black">
      <div className="flex h-[52px] shrink-0 flex-col bg-white">
        <div className="flex h-[29px] items-center pl-0.5">
          <AppIcon />
          <span className="ml-[5px] w-[1738px] tracking-[0.1px] text-[#8f8f8f]">
            Pcbnew — C:\Users\Aranganathan\Desktop\workshopKicad\rectifier1\rectifier1.kicad_pcb
          </span>
          <svg viewBox="0 0 130 14" className="h-[14px] w-[130px]" fill="none" stroke="#8a8a8a">
            <path d="M0 6.500h12M58 3.500h9v9h-9zM60 3.500V1.500h9v9h-2M117 2l11 11M128 2l-11 11" />
          </svg>
        </div>
        <div className="flex h-[23px] items-center pt-[3px] pl-[7px] text-[#6d6d6d]">
          {menus.map(([m, w]) => (
            <span key={m} className={w}>{m}</span>
          ))}
        </div>
      </div>

      <div className="mt-0.5 mr-px flex h-[77px] shrink-0 flex-col border-t border-r border-b-2 border-[#a0a0a0] border-t-white">
        <TopToolbar />
        <div className="flex h-9 items-center bg-[#f0f0f0] pl-1.5">
          <Combo text="Track: 0.300 mm (11.81 mils)" wide className="mr-[3px] w-[220px]" />
          <Combo text="Via: 0.80 mm (31.5 mils)/ 0.40 mm (15.7 mils) *" wide className="w-[337px]" />
          <VSep className="mr-[7px] ml-1.5" />
          <TrackWidth />
          <VSep className="mr-[5px] ml-[7px]" />
          <Combo text="Grid: 0.6350 mm (25.00 mils)" className="w-60" />
        </div>
      </div>

      <div className="flex h-[828px] shrink-0">
        <div className="flex w-[39px] shrink-0 border-r-2 border-b border-l border-[#a0a0a0] border-l-white pt-[5px] pl-0.5">
          <VToolbar items={leftTools} />
        </div>
        <div className="flex w-[1627px] shrink-0 flex-col border-r border-[#a0a0a0]">
          <div className="flex h-[807px]">
            <Board />
            <div className="flex w-5 flex-col items-center border-l border-white pt-1 pb-1">
              <ScrollArrow d="M1.500 8.500 6 4l4.500 4.500" />
              <div className="mt-[387px] mb-auto h-[21px] w-full bg-[#cdcdcd]" />
              <ScrollArrow d="M1.500 3.500 6 8l4.500-4.500" />
            </div>
          </div>
          <div className="flex h-[21px] w-[1605px] items-center border-t border-white pr-1 pl-[3px]">
            <ScrollArrow d="M8.500 1.500 4 6l4.500 4.500" />
            <div className="mr-auto ml-[862px] h-full w-28 bg-[#cdcdcd]" />
            <ScrollArrow d="M3.500 1.500 8 6l-4.500 4.500" />
          </div>
        </div>
        <div className="flex w-[38px] shrink-0 border-r border-b border-l-2 border-[#a0a0a0] border-l-white pt-[5px] pl-px">
          <VToolbar items={rightTools} />
        </div>
        <div className="w-1 shrink-0 bg-[#d9d9d9]" />
        <LayersManager />
      </div>

      <div className="flex h-[43px] shrink-0 border-t-2 border-b-2 border-[#a0a0a0] pl-[15px]">
        {info.map(([a, b, cls]) => (
          <div key={a} className={"flex shrink-0 flex-col tracking-[0.05px] " + cls}>
            <span className="h-5 leading-[22px]">{a}</span>
            <span className="h-5 leading-[22px]">{b}</span>
          </div>
        ))}
      </div>

      <div className="flex h-7 shrink-0 pt-1 pl-[1003px] leading-[22px] whitespace-pre">
        <div className="w-[81px] border-l border-[#d7d7d7] pl-1">Z 2.20</div>
        <div className="w-[219px] border-l border-[#d7d7d7] pl-1">X 151.282400  Y -20.497800</div>
        <div className="w-[338px] border-l border-[#d7d7d7] pl-1">r 152.664745  theta 7.7</div>
        <div className="w-[62px] border-x border-[#d7d7d7] pl-1">mm</div>
      </div>

      <PlotDialog />
    </div>
  );
}
